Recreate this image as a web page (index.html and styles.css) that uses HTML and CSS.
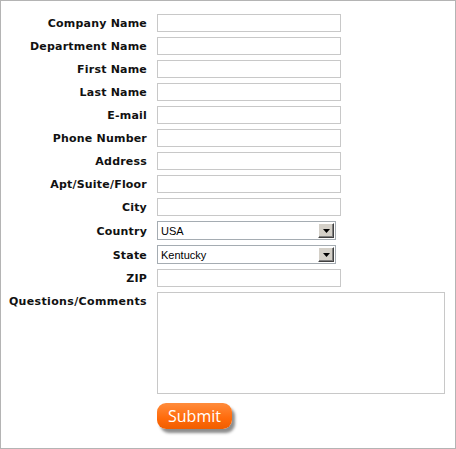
FILE: index.html
```html
<!DOCTYPE html>
<html lang="en">

<head>
  <meta charset="UTF-8">
  <title>Contact Form</title>
  <link rel="stylesheet" href="styles.css">
</head>

<body>
  <div class="page">
    <form class="contact-form">
      <label for="company">Company Name</label>
      <input type="text" id="company">

      <label for="department">Department Name</label>
      <input type="text" id="department">

      <label for="firstName">First Name</label>
      <input type="text" id="firstName">

      <label for="lastName">Last Name</label>
      <input type="text" id="lastName">

      <label for="email">E-mail</label>
      <input type="text" id="email">

      <label for="phone">Phone Number</label>
      <input type="text" id="phone">

      <label for="address">Address</label>
      <input type="text" id="address">

      <label for="apt">Apt/Suite/Floor</label>
      <input type="text" id="apt">

      <label for="city">City</label>
      <input type="text" id="city">

      <label for="country">Country</label>
      <div class="select-box">
        <select id="country">
          <option>USA</option>
        </select>
        <span class="select-arrow"><svg width="7" height="4" viewBox="0 0 7 4"><path d="M0 0h7L3.5 4z" fill="#000"/></svg></span>
      </div>

      <label for="state">State</label>
      <div class="select-box">
        <select id="state">
          <option>Kentucky</option>
        </select>
        <span class="select-arrow"><svg width="7" height="4" viewBox="0 0 7 4"><path d="M0 0h7L3.5 4z" fill="#000"/></svg></span>
      </div>

      <label for="zip">ZIP</label>
      <input type="text" id="zip">

      <label for="comments" class="top-label">Questions/Comments</label>
      <textarea id="comments"></textarea>

      <span></span>
      <button type="submit" class="submit-btn">Submit</button>
    </form>
  </div>
</body>

</html>
```

FILE: styles.css
```css
body {
  margin: 0;
  padding: 0;
  background: #fff;
  font-family: "DejaVu Sans", Verdana, sans-serif;
}

.page {
  width: 456px;
  height: 449px;
  box-sizing: border-box;
  border: 1px solid #b4b4b4;
}

.contact-form {
  display: grid;
  grid-template-columns: 146px auto;
  column-gap: 10px;
  row-gap: 5px;
  padding-top: 13px;
  align-items: center;
}

.contact-form label {
  font-size: 11px;
  font-weight: bold;
  color: #111;
  text-align: right;
  line-height: 16px;
  padding-top: 2px;
  letter-spacing: 0.2px;
}

.contact-form .top-label {
  align-self: start;
  letter-spacing: 0.35px;
}

.contact-form input {
  width: 184px;
  height: 18px;
  box-sizing: border-box;
  margin: 0;
  border: 1px solid #c8c8c8;
  padding: 0 3px;
  font-size: 11px;
}

.select-box {
  display: flex;
  align-items: center;
  width: 179px;
  height: 19px;
  box-sizing: border-box;
  border: 1px solid #a5acb2;
  background: #fff;
  padding-right: 1px;
}

.select-box select {
  flex: 1;
  -webkit-appearance: none;
  appearance: none;
  border: none;
  background: transparent;
  height: 17px;
  padding: 0 3px;
  font-family: "Liberation Sans", Arial, sans-serif;
  font-size: 11px;
  color: #000;
  outline: none;
}

.select-arrow {
  display: flex;
  align-items: center;
  justify-content: center;
  width: 16px;
  height: 15px;
  box-sizing: border-box;
  background: #d4d0c8;
  border-top: 1px solid #fff;
  border-left: 1px solid #fff;
  border-right: 1px solid #404040;
  border-bottom: 1px solid #404040;
  box-shadow: inset -1px -1px 0 #808080;
}

.contact-form textarea {
  width: 288px;
  height: 102px;
  box-sizing: border-box;
  margin: 0;
  border: 1px solid #c8c8c8;
  resize: none;
}

.submit-btn {
  justify-self: start;
  margin-top: 4px;
  width: 75px;
  height: 26px;
  border: none;
  border-radius: 9px;
  background: linear-gradient(#ff8c3c, #ff6a0a 60%, #f05e00);
  box-shadow: 3px 4px 3px rgba(0, 0, 0, 0.45);
  color: #fff;
  font-family: "Open Sans", sans-serif;
  font-size: 16px;
  padding: 0;
  cursor: pointer;
}
```
